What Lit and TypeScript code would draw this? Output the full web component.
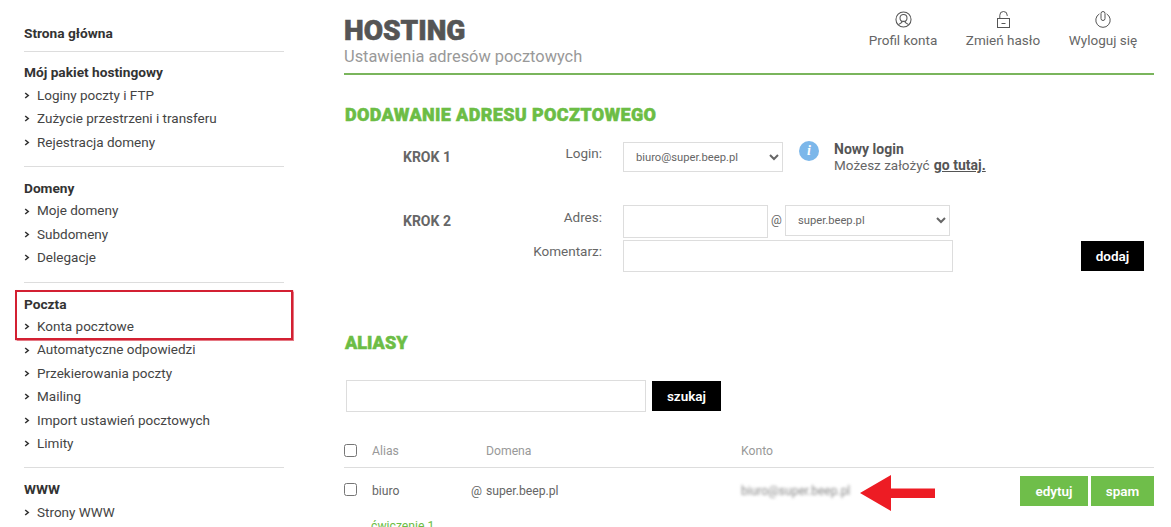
import { LitElement, html, css } from "lit";
import { customElement } from "lit/decorators.js";

const NAV: { title: string; items: string[]; cls?: string }[] = [
  { title: "Strona główna", items: [], cls: "first" },
  { title: "Mój pakiet hostingowy", items: ["Loginy poczty i FTP", "Zużycie przestrzeni i transferu", "Rejestracja domeny"] },
  { title: "Domeny", items: ["Moje domeny", "Subdomeny", "Delegacje"] },
  { title: "Poczta", items: ["Konta pocztowe", "Automatyczne odpowiedzi", "Przekierowania poczty", "Mailing", "Import ustawień pocztowych", "Limity"], cls: "mail" },
  { title: "WWW", items: ["Strony WWW"] },
];

const chevron = html`<svg class="chev" width="6" height="7" viewBox="0 0 6 7"><path d="M1.2 1 L4.2 3.5 L1.2 6" fill="none" stroke="#333" stroke-width="1.6"/></svg>`;

const userIcon = html`<svg width="17" height="17" viewBox="0 0 18 18" fill="none" stroke="#555" stroke-width="1.1"><circle cx="9" cy="9" r="8"/><circle cx="9" cy="7.3" r="3.7"/><path d="M7.2 10.6 v1.6 L3.6 14.4 M10.8 10.6 v1.6 L14.4 14.4"/></svg>`;
const lockIcon = html`<svg width="13" height="17" viewBox="0 0 13 17" fill="none" stroke="#555" stroke-width="1"><rect x="0.5" y="7.5" width="12" height="9"/><path d="M2.8 7.5 V4.2 a3.7 3.7 0 0 1 7.4 0 V5"/><path d="M4.5 12.5 h4"/></svg>`;
const powerIcon = html`<svg width="16" height="17" viewBox="0 0 16 17" fill="none" stroke="#555" stroke-width="1"><path d="M4.4 2.9 a7.2 7.2 0 1 0 7.2 0"/><rect x="6" y="0.5" width="4" height="9" rx="2"/></svg>`;

@customElement("app-root")
export class AppRoot extends LitElement {
  static styles = css`
    :host {
      display: flex;
      width: 1171px;
      height: 527px;
      overflow: hidden;
      background: #fff;
      font-family: Roboto, "Noto Sans", sans-serif;
      font-size: 13.5px;
      color: #444;
    }
    .side { width: 260px; margin-left: 24px; flex: none; padding-top: 22px; }
    .sec { padding: 10px 0 12px; border-bottom: 1px solid #ddd; position: relative; line-height: 23.4px; }
    .sec.first { padding: 0 0 7px; }
    .sec.first + .sec { padding-top: 9px; }
    .sec:last-child { border-bottom: none; }
    .sec h3 { margin: 0; font-size: 13.7px; font-weight: 700; color: #333; line-height: 22.4px; }
    .sec a { display: flex; align-items: center; color: #444; height: 23.4px; }
    .chev { margin-right: 7px; width: 6px; }
    .mail::after {
      content: "";
      position: absolute;
      left: -9px;
      top: 7px;
      width: 274px;
      height: 46px;
      border: 2px solid #d32032;
      box-shadow: 0 0 1px 0.5px rgba(211, 32, 50, 0.6);
    }
    .main { margin-left: 60px; width: 810px; flex: none; }
    .head { display: flex; justify-content: space-between; height: 73px; border-bottom: 2px solid #7ab55c; }
    .brand h1 { margin: 15px 0 0; font-size: 28px; line-height: 32px; font-weight: 900; color: #555; -webkit-text-stroke: 0.6px #555; }
    .brand p { margin: 0; font-size: 16.4px; line-height: 20px; color: #999; }
    .tools { display: flex; padding: 11px 1px 0 0; }
    .tool { display: flex; flex-direction: column; align-items: center; gap: 3px; width: 100px; font-size: 13.5px; color: #666; line-height: 18px; height: 40px; }
    .tool svg { height: 17px; }
    h2 { margin: 0; color: #6cbd45; font-size: 18px; font-weight: 900; line-height: 24px; -webkit-text-stroke: 0.5px #6cbd45; }
    .h-add { margin: 28px 0 0 1px; letter-spacing: 0.35px; }
    .row { display: grid; grid-template-columns: 59px 60px 139px 21px 1fr; align-items: start; }
    .step { grid-column: 2; font-weight: 700; font-size: 14px; color: #666; line-height: 20px; }
    .lab { grid-column: 3; text-align: right; color: #666; font-size: 13.5px; line-height: 20px; }
    .ctl { grid-column: 5; display: flex; align-items: flex-start; }
    .r1 { margin-top: 15px; height: 63px; }
    .r1 .step { margin-top: 5px; }
    .r1 .lab { margin-top: 1px; }
    .r2 { height: 35px; }
    .r2 .step { margin-top: 6px; }
    .r2 .lab { margin-top: 2px; }
    .r3 { height: 32px; }
    .r3 .lab { margin-top: 1px; }
    select {
      font-family: inherit; font-size: 11.2px; color: #666; background: #fff;
      border: 1px solid #ddd; padding: 0 8px; margin: 0; box-sizing: border-box;
    }
    input[type="text"] { box-sizing: border-box; border: 1px solid #ddd; margin: 0; padding: 0; background: #fff; display: block; }
    .s1 { width: 160px; height: 30px; }
    .info { display: flex; margin-left: 16px; margin-top: -1px; }
    .dot { width: 20px; height: 20px; border-radius: 50%; background: #7cb7ea; color: #fff; font: italic 700 14px/20px "Liberation Serif", serif; text-align: center; }
    .note { margin-left: 15px; line-height: 16px; color: #666; font-size: 13.5px; }
    .note b { display: block; color: #555; font-size: 14px; }
    .note a { font-weight: 700; font-size: 14px; text-decoration: underline; color: #555; margin-left: 1px; }
    .i-addr { width: 145px; height: 33px; }
    .at { width: 17px; text-align: center; color: #666; font-size: 12px; line-height: 30px; }
    .s2 { width: 165px; height: 31px; }
    .i-com { width: 330px; height: 32px; }
    .btn { background: #000; color: #fff; border: none; font: 600 13.5px Roboto, sans-serif; height: 30px; margin: 0; padding: 0; }
    .dodaj { width: 63px; margin: 1px 0 0 128px; }
    .h-alias { margin-top: 59px; margin-left: 1px; }
    .search { display: flex; align-items: center; margin: 25px 0 0 2px; gap: 6px; }
    .i-search { width: 300px; height: 32px; }
    .szukaj { width: 69px; }
    .thead, .trow { display: grid; grid-template-columns: 28px 99px 15px 255px 279px 68px 3px 63px; align-items: center; }
    .thead { margin-top: 22px; height: 33px; border-bottom: 1px solid #ddd; color: #999; font-size: 12.2px; }
    .trow { height: 45px; color: #666; font-size: 12.2px; }
    .trow .b1 { grid-column: 6; }
    .trow .b2 { grid-column: 8; }
    input[type="checkbox"] { margin: 0; width: 13px; height: 13px; }
    .trow input[type="checkbox"] { margin-bottom: 2px; }
    .thead .dom { grid-column: 4; }
    .thead .kon { grid-column: 5; }
    .blur { filter: blur(1.4px); color: #888; font-size: 12px; }
    .mailcell { position: relative; }
    .arrow { position: absolute; left: 119px; top: -9px; }
    .g { background: #6fbe4a; color: #fff; border: none; height: 30px; font: 600 13.5px Roboto, sans-serif; padding: 0; margin: 0; }
    .sub { margin-left: 27px; margin-top: 5px; color: #6cbd45; font-size: 12.2px; line-height: 16px; }
  `;

  render() {
    return html`
      <nav class="side">
        ${NAV.map(
          (s) => html`<div class="sec ${s.cls ?? ""}">
            <h3>${s.title}</h3>
            ${s.items.map((i) => html`<a>${chevron}${i}</a>`)}
          </div>`
        )}
      </nav>
      <main class="main">
        <header class="head">
          <div class="brand">
            <h1>HOSTING</h1>
            <p>Ustawienia adresów pocztowych</p>
          </div>
          <div class="tools">
            <div class="tool">${userIcon}<span>Profil konta</span></div>
            <div class="tool">${lockIcon}<span>Zmień hasło</span></div>
            <div class="tool">${powerIcon}<span>Wyloguj się</span></div>
          </div>
        </header>
        <h2 class="h-add">DODAWANIE ADRESU POCZTOWEGO</h2>
        <div class="row r1">
          <div class="step">KROK 1</div>
          <div class="lab">Login:</div>
          <div class="ctl">
            <select class="s1"><option>biuro@super.beep.pl</option></select>
            <div class="info">
              <div class="dot">i</div>
              <div class="note"><b>Nowy login</b>Możesz założyć <a>go tutaj.</a></div>
            </div>
          </div>
        </div>
        <div class="row r2">
          <div class="step">KROK 2</div>
          <div class="lab">Adres:</div>
          <div class="ctl">
            <input type="text" class="i-addr" />
            <span class="at">@</span>
            <select class="s2"><option>super.beep.pl</option></select>
          </div>
        </div>
        <div class="row r3">
          <div class="lab">Komentarz:</div>
          <div class="ctl">
            <input type="text" class="i-com" />
            <button class="btn dodaj">dodaj</button>
          </div>
        </div>
        <h2 class="h-alias">ALIASY</h2>
        <div class="search">
          <input type="text" class="i-search" />
          <button class="btn szukaj">szukaj</button>
        </div>
        <div class="thead">
          <input type="checkbox" />
          <span>Alias</span>
          <span class="dom">Domena</span>
          <span class="kon">Konto</span>
        </div>
        <div class="trow">
          <input type="checkbox" />
          <span>biuro</span>
          <span>@</span>
          <span>super.beep.pl</span>
          <span class="mailcell">
            <span class="blur">biuro@super.beep.pl</span>
            <svg class="arrow" width="75" height="36" viewBox="0 0 75 36"><path d="M0 18 L31 0 V13.5 H75 V23 H31 V36 Z" fill="#ed1c24"/></svg>
          </span>
          <button class="g b1">edytuj</button>
          <button class="g b2">spam</button>
        </div>
        <div class="sub">ćwiczenie 1</div>
      </main>
    `;
  }
}
